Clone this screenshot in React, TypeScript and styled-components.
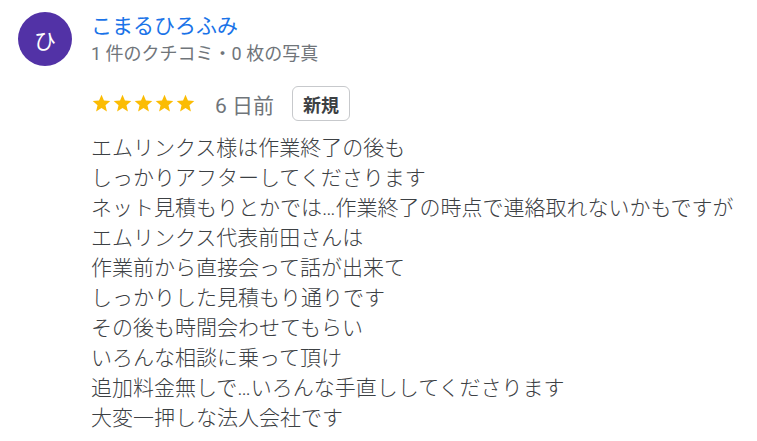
import { createGlobalStyle, styled } from 'styled-components';

const GlobalStyle = createGlobalStyle`
  body {
    margin: 0;
    background: #fff;
    font-family: Roboto, 'Noto Sans CJK JP', sans-serif;
  }
`;

const lines = [
  'エムリンクス様は作業終了の後も',
  'しっかりアフターしてくださります',
  'ネット見積もりとかでは…作業終了の時点で連絡取れないかもですが',
  'エムリンクス代表前田さんは',
  '作業前から直接会って話が出来て',
  'しっかりした見積もり通りです',
  'その後も時間会わせてもらい',
  'いろんな相談に乗って頂け',
  '追加料金無しで…いろんな手直ししてくださります',
  '大変一押しな法人会社です',
];

function Star() {
  return (
    <svg width="21" height="21" viewBox="0 0 24 24">
      <path fill="#fbbc04" d="M12 17.27L18.18 21l-1.64-7.03L22 9.24l-7.19-.61L12 2 9.19 8.63 2 9.24l5.46 4.73L5.82 21z" />
    </svg>
  );
}

function App() {
  return (
    <>
      <GlobalStyle />
      <StyledReview>
        <StyledAvatar>ひ</StyledAvatar>
        <StyledMain>
          <StyledName>こまるひろふみ</StyledName>
          <StyledMeta>1 件のクチコミ・0 枚の写真</StyledMeta>
          <StyledRatingRow>
            <StyledStars>
              {Array.from({ length: 5 }).map((_, i) => (
                <Star key={i} />
              ))}
            </StyledStars>
            <StyledDate>6 日前</StyledDate>
            <StyledBadge>新規</StyledBadge>
          </StyledRatingRow>
          <StyledBody>
            {lines.map((line) => (
              <StyledLine key={line}>{line}</StyledLine>
            ))}
          </StyledBody>
        </StyledMain>
      </StyledReview>
    </>
  );
}

export default App;

const StyledReview = styled.div`
  display: flex;
  gap: 19px;
  padding: 12px 18px 0;
`;

const StyledAvatar = styled.div`
  display: flex;
  flex-shrink: 0;
  align-items: center;
  justify-content: center;
  width: 54px;
  height: 54px;
  border-radius: 50%;
  background-color: #5232a6;
  color: #fff;
  font-size: 22px;
  font-family: 'Noto Sans CJK JP', sans-serif;
`;

const StyledMain = styled.div`
  display: flex;
  flex-direction: column;
`;

const StyledName = styled.div`
  color: #1a73e8;
  font-size: 21px;
  line-height: 28px;
`;

const StyledMeta = styled.div`
  margin-top: 2px;
  color: #70757a;
  font-size: 18px;
  line-height: 24px;
`;

const StyledRatingRow = styled.div`
  display: flex;
  align-items: center;
  margin-top: 20px;
`;

const StyledStars = styled.div`
  display: flex;
  margin-right: 19px;
`;

const StyledDate = styled.span`
  margin-right: 18px;
  color: #70757a;
  font-size: 21px;
`;

const StyledBadge = styled.span`
  display: inline-flex;
  box-sizing: border-box;
  align-items: center;
  height: 35px;
  padding: 0 10px;
  border: 1px solid #c7c9cc;
  border-radius: 6px;
  color: #3c4043;
  font-size: 18px;
  font-weight: 700;
`;

const StyledBody = styled.div`
  display: flex;
  flex-direction: column;
  margin-top: 12px;
`;

const StyledLine = styled.div`
  color: #3c4043;
  font-size: 21px;
  font-weight: 300;
  line-height: 30px;
`;
